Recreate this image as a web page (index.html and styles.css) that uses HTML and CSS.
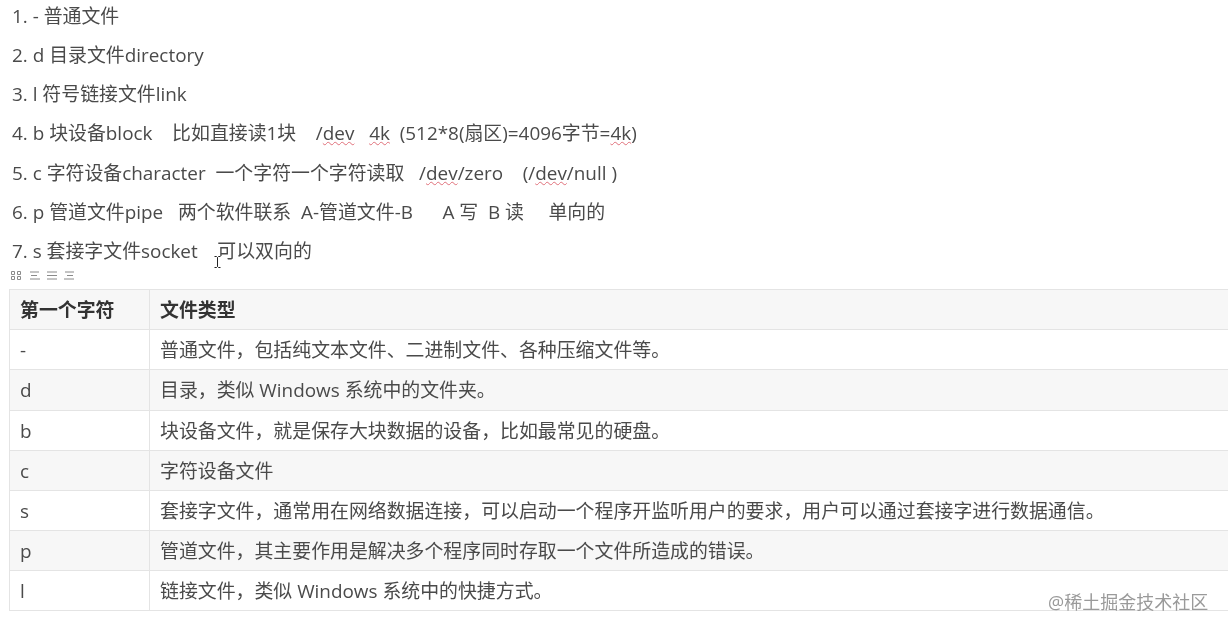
FILE: index.html
```html
<!DOCTYPE html>
<html lang="zh-CN">
<head>
<meta charset="utf-8">
<title>文件类型</title>
<link rel="stylesheet" href="styles.css">
</head>
<body>
<div class="page">
  <div class="lines">
    <p class="line">1. - 普通文件</p>
    <p class="line">2. d 目录文件directory</p>
    <p class="line">3. l 符号链接文件link</p>
    <p class="line">4. b 块设备block    比如直接读1块    /<span class="sp">dev</span>   <span class="sp">4k</span>  (512*8(扇区)=4096字节=<span class="sp">4k</span>)</p>
    <p class="line">5. c 字符设备character  一个字符一个字符读取   /<span class="sp">dev</span>/zero    (/<span class="sp">dev</span>/null )</p>
    <p class="line">6. p 管道文件pipe   两个软件联系  A-管道文件-B      A 写  B 读     单向的</p>
    <p class="line">7. s 套接字文件socket    可以双向的</p>
  </div>
  <div class="tools">
    <svg class="tool tool-grid" width="10" height="9" viewBox="0 0 10 9"><path d="M.5.5h3v3h-3zM6.500.5h3v3h-3zM.5 5.500h3v3h-3zM6.500 5.500h3v3h-3z" fill="none" stroke="#8a8a8a"/></svg>
    <svg class="tool" width="10" height="9" viewBox="0 0 10 9"><path d="M0 1h9M1 4.500h6M0 8h10" fill="none" stroke="#8a8a8a"/></svg>
    <svg class="tool" width="10" height="9" viewBox="0 0 10 9"><path d="M0 1h10M0 4.500h10M0 8h10" fill="none" stroke="#8a8a8a"/></svg>
    <svg class="tool" width="10" height="9" viewBox="0 0 10 9"><path d="M1 1h9M3 4.500h6M0 8h10" fill="none" stroke="#8a8a8a"/></svg>
  </div>
  <table class="types">
    <thead>
      <tr><th class="c1">第一个字符</th><th>文件类型</th></tr>
    </thead>
    <tbody>
      <tr><td>-</td><td>普通文件，包括纯文本文件、二进制文件、各种压缩文件等。</td></tr>
      <tr><td>d</td><td>目录，类似 Windows 系统中的文件夹。</td></tr>
      <tr><td>b</td><td>块设备文件，就是保存大块数据的设备，比如最常见的硬盘。</td></tr>
      <tr><td>c</td><td>字符设备文件</td></tr>
      <tr><td>s</td><td>套接字文件，通常用在网络数据连接，可以启动一个程序开监听用户的要求，用户可以通过套接字进行数据通信。</td></tr>
      <tr><td>p</td><td>管道文件，其主要作用是解决多个程序同时存取一个文件所造成的错误。</td></tr>
      <tr><td>l</td><td>链接文件，类似 Windows 系统中的快捷方式。</td></tr>
    </tbody>
  </table>
  <svg class="cursor" width="7" height="12" viewBox="0 0 7 12"><path d="M.5.500h2l1 1 1-1h2M3.500 1.500v9M.5 11.500h2l1-1 1 1h2" fill="none" stroke="#222"/></svg>
  <div class="mark">@稀土掘金技术社区</div>
</div>
</body>
</html>
```
FILE: styles.css
```css
html, body {
  margin: 0;
  padding: 0;
  background: #fff;
}
.page {
  position: relative;
  width: 1228px;
  height: 632px;
  overflow: hidden;
  font-family: "Open Sans", "Noto Sans CJK SC", sans-serif;
  font-size: 18.9px;
  color: #4a4a4a;
  filter: blur(0.35px);
}
.lines {
  padding: 0.5px 0 0 12px;
}
.line {
  margin: 0;
  height: 39.3px;
  line-height: 31px;
  white-space: pre;
}
.sp {
  text-decoration: underline wavy #e0707a;
  text-decoration-thickness: 1px;
  text-underline-offset: 1px;
}
.tools {
  display: flex;
  gap: 7px;
  padding: 0 0 0 11px;
  height: 14px;
  margin-top: -7.5px;
  align-items: center;
}
.tool {
  display: block;
}
.tool-grid {
  margin-right: 2px;
}
.types {
  border-collapse: collapse;
  table-layout: fixed;
  width: 1300px;
  margin: 7px 0 0 9px;
  line-height: 24px;
}
.types th, .types td {
  height: 38.15px;
  padding: 1px 10px 0;
  border: 1px solid #e4e4e4;
  text-align: left;
  white-space: nowrap;
}
.types th {
  font-weight: 700;
  background: #f7f7f7;
  color: #333;
}
.types th.c1, .types td:first-child {
  width: 119px;
}
.types tbody tr:nth-child(even) td {
  background: #f7f7f7;
}
.cursor {
  position: absolute;
  left: 214px;
  top: 256px;
}
.mark {
  position: absolute;
  left: 1048px;
  top: 590px;
  font-size: 18px;
  line-height: 24px;
  color: #9a9a9a;
}
```
